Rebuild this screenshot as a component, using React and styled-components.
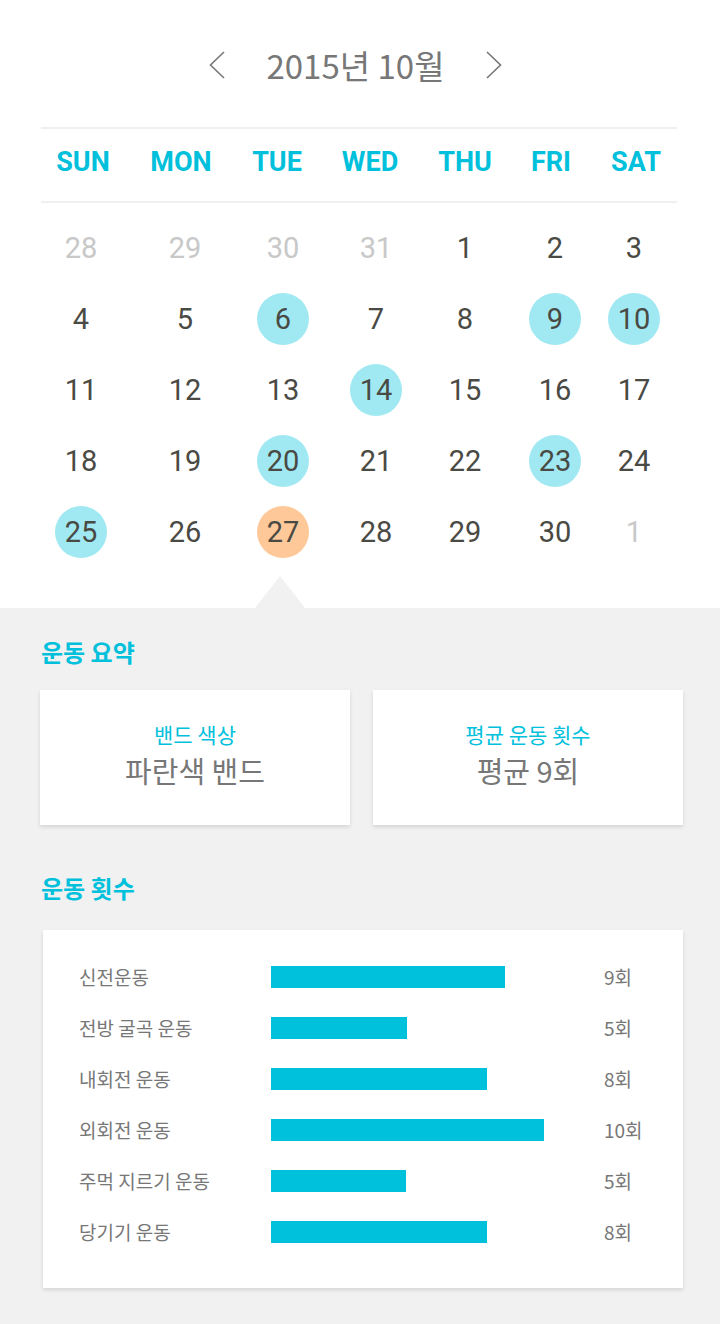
import React from "react";
import styled, { createGlobalStyle } from "styled-components";

const GlobalStyle = createGlobalStyle`
  html, body { margin: 0; padding: 0; background: #ffffff; }
  body { font-family: "Roboto", "Noto Sans CJK KR", sans-serif; }
  * { box-sizing: border-box; }
`;

const CYAN = "#00c0dc";

const Page = styled.div`
  width: 720px;
  min-height: 1324px;
  display: flex;
  flex-direction: column;
  background: #f1f1f1;
`;

const CalendarSection = styled.section`
  background: #ffffff;
  padding: 0 43px 41px 41px;
`;

const MonthNav = styled.div`
  height: 127px;
  display: flex;
  align-items: center;
  justify-content: center;
  gap: 41px;
  padding: 2px 7px 0 0;
`;

const NavButton = styled.button`
  border: none;
  background: none;
  padding: 0;
  width: 16px;
  height: 28px;
  display: flex;
  align-items: center;
  justify-content: center;
  cursor: pointer;
`;

const MonthTitle = styled.h1`
  margin: 0;
  font-family: "Noto Sans CJK KR", sans-serif;
  font-weight: 400;
  font-size: 33px;
  line-height: 40px;
  color: #777777;
`;

const WeekHeader = styled.div`
  display: grid;
  grid-template-columns: ${(p) => p.$cols};
  height: 76px;
  border-top: 2px solid #f0f0f0;
  border-bottom: 2px solid #f0f0f0;
  align-items: center;
  padding-bottom: 6px;
`;

const DayName = styled.div`
  display: flex;
  justify-content: center;
  font-family: "Roboto", sans-serif;
  font-weight: 700;
  font-size: 27px;
  color: ${CYAN};
`;

const DatesGrid = styled.div`
  display: grid;
  grid-template-columns: ${(p) => p.$cols};
  grid-auto-rows: 71px;
  padding-top: 9px;
`;

const DateCell = styled.div`
  display: flex;
  justify-content: center;
  align-items: center;
`;

const DateNum = styled.span`
  flex: 0 0 auto;
  width: 52px;
  height: 52px;
  border-radius: 50%;
  display: flex;
  align-items: center;
  justify-content: center;
  font-family: "Roboto", sans-serif;
  font-size: 29px;
  color: ${(p) => (p.$muted ? "#c8c8c8" : "#4a4a44")};
  background: ${(p) =>
    p.$mark === "cyan" ? "#a0e9f2" : p.$mark === "orange" ? "#ffc899" : "transparent"};
`;

const Summary = styled.section`
  position: relative;
  flex: 1;
  background: #f1f1f1;
  padding: 28px 37px 36px 40px;
  &::before {
    content: "";
    position: absolute;
    top: -32px;
    left: 255px;
    border-left: 25px solid transparent;
    border-right: 25px solid transparent;
    border-bottom: 32px solid #f1f1f1;
  }
`;

const Heading = styled.h2`
  margin: 0 0 0 1px;
  font-family: "Noto Sans CJK KR", sans-serif;
  font-weight: 700;
  font-size: 24px;
  line-height: 32px;
  color: ${CYAN};
`;

const CardRow = styled.div`
  display: grid;
  grid-template-columns: 310px 310px;
  gap: 23px;
  margin-top: 22px;
  margin-bottom: 47px;
`;

const Card = styled.div`
  background: #ffffff;
  box-shadow: 0 2px 4px rgba(0, 0, 0, 0.12);
`;

const InfoCard = styled(Card)`
  height: 135px;
  display: flex;
  flex-direction: column;
  align-items: center;
  padding-top: 30px;
  gap: 3px;
  font-family: "Noto Sans CJK KR", sans-serif;
`;

const InfoLabel = styled.div`
  font-size: 21px;
  line-height: 28px;
  color: ${CYAN};
`;

const InfoValue = styled.div`
  font-size: 29px;
  line-height: 38px;
  color: #777777;
`;

const CountCard = styled(Card)`
  margin: 26px 0 0 3px;
  padding: 21px 0 31px 36px;
`;

const CountRow = styled.div`
  display: grid;
  grid-template-columns: 192px 333px auto;
  align-items: center;
  height: 51px;
  font-family: "Noto Sans CJK KR", sans-serif;
  font-size: 19px;
  color: #777777;
`;

const Bar = styled.div`
  height: 22px;
  background: #00c1dc;
`;

const Count = styled.span`
  font-size: 19px;
`;

const Chevron = ({ dir }) => (
  <svg width="16" height="28" viewBox="0 0 16 28" fill="none">
    <path
      d={dir === "left" ? "M15 1 L1.5 14 L15 27" : "M1 1 L14.5 14 L1 27"}
      stroke="#777"
      strokeWidth="1.6"
    />
  </svg>
);

const days = ["SUN", "MON", "TUE", "WED", "THU", "FRI", "SAT"];

const cyanDays = [6, 9, 10, 14, 20, 23, 25];

const dates = [
  ...[28, 29, 30, 31].map((d) => ({ d, muted: true })),
  ...Array.from({ length: 30 }, (_, i) => ({
    d: i + 1,
    mark: i + 1 === 27 ? "orange" : cyanDays.includes(i + 1) ? "cyan" : undefined,
  })),
  { d: 1, muted: true },
];

const counts = [
  { name: "신전운동", w: 234, c: "9회" },
  { name: "전방 굴곡 운동", w: 136, c: "5회" },
  { name: "내회전 운동", w: 216, c: "8회" },
  { name: "외회전 운동", w: 273, c: "10회" },
  { name: "주먹 지르기 운동", w: 135, c: "5회" },
  { name: "당기기 운동", w: 216, c: "8회" },
];

export default function App() {
  return (
    <>
      <GlobalStyle />
      <Page>
        <CalendarSection>
          <MonthNav>
            <NavButton aria-label="이전 달">
              <Chevron dir="left" />
            </NavButton>
            <MonthTitle>2015년 10월</MonthTitle>
            <NavButton aria-label="다음 달">
              <Chevron dir="right" />
            </NavButton>
          </MonthNav>
          <WeekHeader $cols="84px 112px 80px 106px 84px 88px 82px">
            {days.map((d) => (
              <DayName key={d}>{d}</DayName>
            ))}
          </WeekHeader>
          <DatesGrid $cols="80px 128px 68px 118px 60px 120px 38px">
            {dates.map((x, i) => (
              <DateCell key={i}>
                <DateNum $muted={x.muted} $mark={x.mark}>
                  {x.d}
                </DateNum>
              </DateCell>
            ))}
          </DatesGrid>
        </CalendarSection>
        <Summary>
          <Heading>운동 요약</Heading>
          <CardRow>
            <InfoCard>
              <InfoLabel>밴드 색상</InfoLabel>
              <InfoValue>파란색 밴드</InfoValue>
            </InfoCard>
            <InfoCard>
              <InfoLabel>평균 운동 횟수</InfoLabel>
              <InfoValue>평균 9회</InfoValue>
            </InfoCard>
          </CardRow>
          <Heading>운동 횟수</Heading>
          <CountCard>
            {counts.map((r) => (
              <CountRow key={r.name}>
                <span>{r.name}</span>
                <div>
                  <Bar style={{ width: r.w }} />
                </div>
                <Count>{r.c}</Count>
              </CountRow>
            ))}
          </CountCard>
        </Summary>
      </Page>
    </>
  );
}
